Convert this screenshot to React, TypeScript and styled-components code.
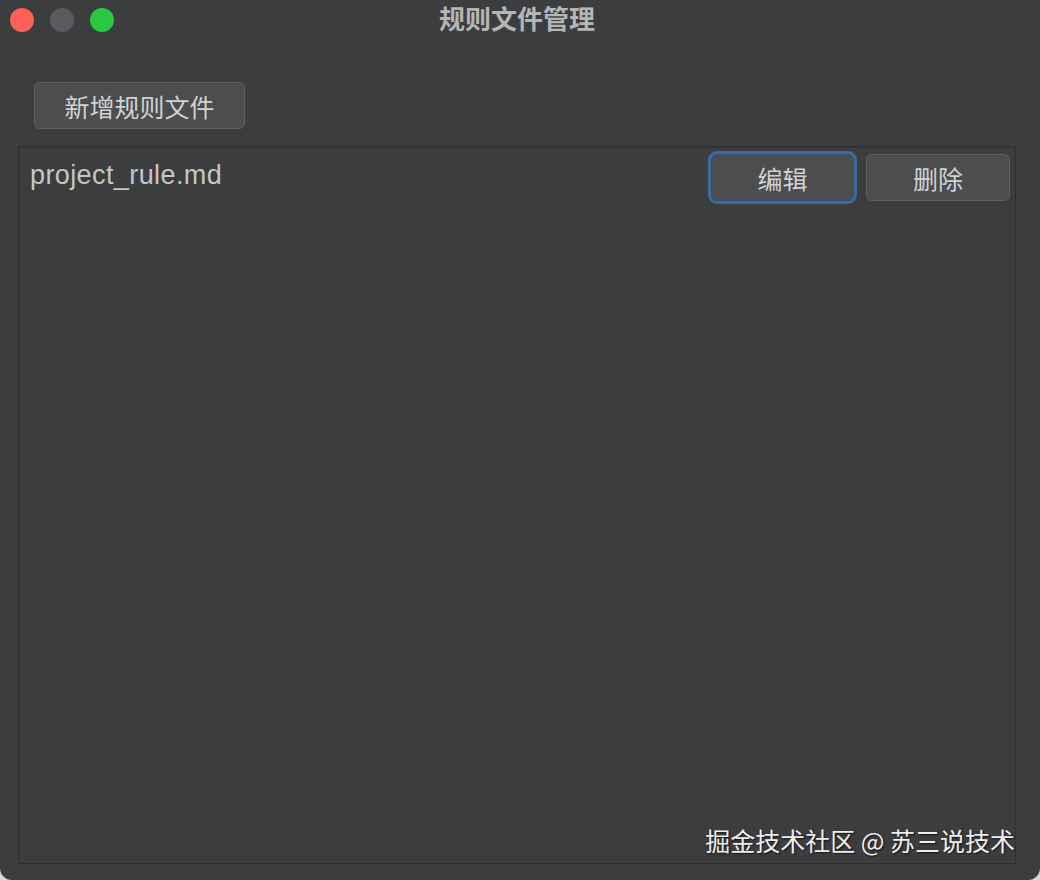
import React from "react";
import styled, { createGlobalStyle } from "styled-components";

const Global = createGlobalStyle`
  html, body { margin: 0; padding: 0; background: #d8d8d8; }
  body { width: 1040px; height: 880px; overflow: hidden; }
  #root { width: 1040px; height: 880px; }
`;

const FONT = `"Liberation Sans", "Noto Sans CJK SC", sans-serif`;

const Window = styled.div`
  width: 1040px;
  height: 880px;
  box-sizing: border-box;
  background: #3c3d3f;
  border-radius: 0 0 12px 12px;
  display: flex;
  flex-direction: column;
  font-family: ${FONT};
  position: relative;
  overflow: hidden;
`;

const TitleBar = styled.div`
  height: 40px;
  display: flex;
  align-items: center;
  position: relative;
  padding-left: 10px;
  gap: 16px;
`;

const Light = styled.span<{ $c: string }>`
  width: 24px;
  height: 24px;
  border-radius: 50%;
  background: ${(p) => p.$c};
`;

const Title = styled.div`
  position: absolute;
  left: 0;
  right: 6px;
  top: -3px;
  height: 40px;
  display: flex;
  align-items: center;
  justify-content: center;
  font-size: 26px;
  font-weight: 700;
  color: #b5b5b5;
  pointer-events: none;
`;

const Toolbar = styled.div`
  padding: 42px 0 0 34px;
  height: 106px;
  box-sizing: border-box;
`;

const Button = styled.button<{ $focus?: boolean; $w: number }>`
  font-family: ${FONT};
  font-size: 25px;
  color: #d2d2d2;
  background: #4b4d4f;
  border: 1px solid #5e6062;
  border-radius: 6px;
  width: ${(p) => p.$w}px;
  height: 47px;
  padding: 0;
  display: flex;
  align-items: center;
  justify-content: center;
  box-sizing: border-box;
  ${(p) =>
    p.$focus
      ? `box-shadow: 0 0 0 3px #3e6a9c; border-color: #2f4f73;`
      : ""}
`;

const Panel = styled.div`
  margin: 0 24px 16px 18px;
  flex: 1;
  border: 1px solid #2e2f31;
  box-shadow: inset 1px 1px 0 #353638;
  background: #3c3d3f;
  position: relative;
`;

const Row = styled.div`
  display: flex;
  align-items: flex-start;
  justify-content: space-between;
  padding: 7px 5px 0 11px;
`;

const FileName = styled.div`
  font-family: "Liberation Sans", sans-serif;
  font-size: 27px;
  color: #c6c6c6;
  padding-top: 6px;
  letter-spacing: 0.4px;
`;

const Actions = styled.div`
  display: flex;
  gap: 12px;
  align-items: center;
  padding-top: 0;
`;

const Watermark = styled.div`
  position: absolute;
  right: 0;
  bottom: 5px;
  font-family: "Noto Sans CJK SC", sans-serif;
  font-size: 25px;
  color: #eeeeee;
  text-shadow: 1px 1px 2px rgba(0, 0, 0, 0.7);
  white-space: pre;
`;

export default function App() {
  return (
    <>
      <Global />
      <Window>
        <TitleBar>
          <Light $c="#fe5f57" />
          <Light $c="#5a5b5e" />
          <Light $c="#28c840" />
          <Title>规则文件管理</Title>
        </TitleBar>
        <Toolbar>
          <Button $w={211}>新增规则文件</Button>
        </Toolbar>
        <Panel>
          <Row>
            <FileName>project_rule.md</FileName>
            <Actions>
              <Button $w={143} $focus>
                编辑
              </Button>
              <Button $w={144}>删除</Button>
            </Actions>
          </Row>
          <Watermark>掘金技术社区 @ 苏三说技术</Watermark>
        </Panel>
      </Window>
    </>
  );
}
